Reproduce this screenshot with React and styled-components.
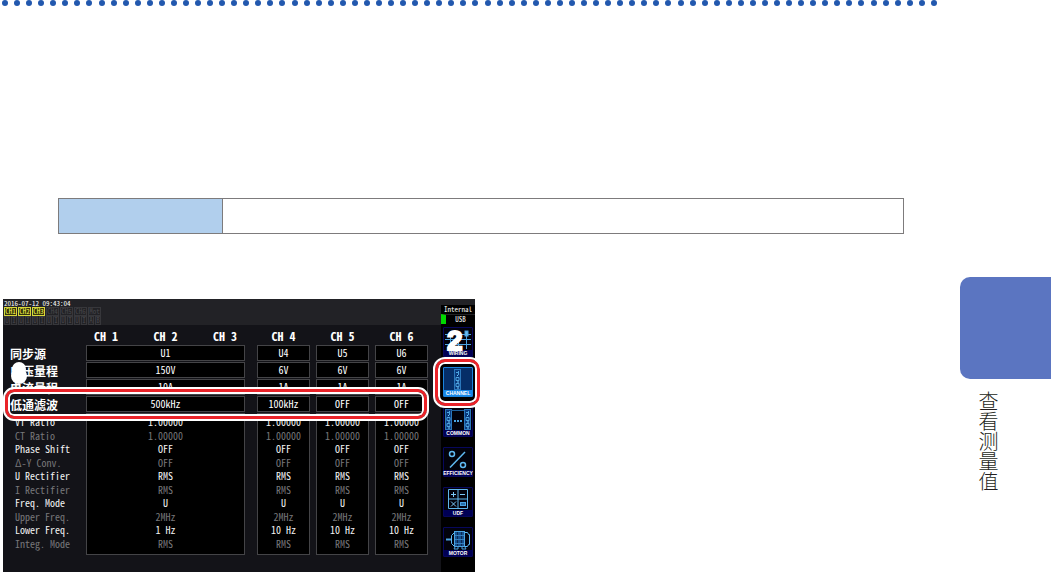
import React from 'react'
import styled, { createGlobalStyle } from "styled-components";


const GlobalStyle = createGlobalStyle`
  * { box-sizing: border-box; }
  body {
    margin: 0;
    background: #fff;
    font-family: "Noto Sans CJK SC", sans-serif;
  }
`;
const Page = styled.div`
  display: grid;
  grid-template-columns: 1fr 91px;
`;
const Dots = styled.div`
  display: flex;
  justify-content: space-between;
  padding: 0 22px 0 2px;
`;
const Dot = styled.span`
  width: 6px;
  height: 6px;
  border-radius: 50%;
  background: #2258ae;
`;
const Notice = styled.section`
  display: grid;
  grid-template-columns: 164px 1fr;
  height: 36px;
  margin: 192px 56px 65px 58px;
  border: 1px solid #7d7b7c;
`;
const NoticeHead = styled.div`
  background: #b1cfed;
  border-right: 1px solid #7d7b7c;
`;
const Aside = styled.aside`
  padding-top: 277px;
`;
const Tab = styled.div`
  height: 102px;
  border-radius: 10px 0 0 10px;
  background: #5b75c1;
`;
const Chapter = styled.h2`
  margin: 12px 0 0 18px;
  writing-mode: vertical-rl;
  font-size: 20px;
  line-height: 20px;
  font-weight: 300;
  color: #231f20;
`;

const Screen = styled.section`
  position: relative;
  display: grid;
  grid-template-columns: 1fr 34px;
  max-width: 472px;
  margin-left: 3px;
  background: #131318;
  color: #fff;
  font-family: "Noto Sans Mono CJK SC", "Noto Sans CJK SC", monospace;
`;
const StatusBar = styled.header`
  height: 26px;
  padding-left: 1px;
  background: #222226;
  font-size: 7px;
  line-height: 8px;
`;
const ChipRow = styled.div`
  display: flex;
  gap: 1px;
  height: 9px;
`;
const Chip = styled.span`
  width: ${(props) => (props.$small ? "6px" : "13px")};
  border: 1px solid ${(props) => (props.$on ? "#d8d83a" : "#37373b")};
  color: ${(props) => (props.$on ? "#ffff50" : "#48484c")};
  background: ${(props) => (props.$on ? "#35350c" : "transparent")};
  display: flex;
  align-items: center;
  justify-content: center;
  line-height: 7px;
`;
const Settings = styled.table`
  width: 100%;
  border-spacing: 0;
  table-layout: fixed;
  margin-bottom: 17px;
  font-size: 10px;

  th, td {
    padding: 0;
  }
`;
const Col = styled.col`
  width: ${(props) => props.$w}px;
`;
const Heads = styled.div`
  display: flex;
  justify-content: ${(props) => (props.$wide ? "space-between" : "center")};
  height: 20px;
  margin-right: ${(props) => props.$gap}px;
  padding: ${(props) => (props.$wide ? "0 8px" : "0")};
  font-size: 12px;
  line-height: 22px;
  font-weight: 700;
  white-space: pre;
`;
const RowName = styled.th`
  padding-left: 7px !important;
  text-align: left;
  font-family: "Noto Sans CJK SC", sans-serif;
  font-size: 12px;
  line-height: 16px;
  font-weight: 700;
`;
const Box = styled.div`
  height: 16px;
  margin: 0 ${(props) => props.$gap}px 1px 0;
  border: 1px solid #444447;
  background: #000;
  line-height: 14px;
  text-align: center;
`;
const ListRow = styled.tr`
  height: ${(props) => props.$h}px;
  line-height: ${(props) => props.$h}px;
  color: ${(props) => (props.$dim ? "#77777a" : "#f2f2f2")};
`;
const ListName = styled.th`
  padding-left: 12px !important;
  text-align: left;
  font-weight: 400;
`;
const ListValue = styled.div`
  height: ${(props) => props.$h}px;
  margin-right: ${(props) => props.$gap}px;
  border: solid #444447;
  border-width: 0 1px;
  background: #000;
  text-align: center;
`;
const Edge = styled.div`
  height: ${(props) => (props.$top ? "2px" : "5px")};
  margin-right: ${(props) => props.$gap}px;
  border: 1px solid #444447;
  border-width: ${(props) => (props.$top ? "1px 1px 0" : "0 1px 1px")};
  background: #000;
`;

const Side = styled.nav`
  display: flex;
  flex-direction: column;
  align-items: center;
  background: #000;
`;
const Source = styled.div`
  width: 100%;
  height: 26px;
  margin-bottom: 2px;
  border-top: 6px solid #222226;
  font-size: 7px;
  line-height: 9px;
  text-align: center;
`;
const Usb = styled.div`
  height: 10px;
  border-top: 1px solid #222226;
  border-left: 5px solid #00d800;
`;
const SideButton = styled.button`
  display: flex;
  flex-direction: column;
  align-items: center;
  width: 30px;
  height: 30px;
  margin-bottom: 10px;
  padding: 0;
  border: 1px solid ${(props) => (props.$active ? "#1b83dd" : "#07075c")};
  border-radius: 1px;
  background: ${(props) => (props.$active ? "#1687e8" : "#000054")};
  color: #fff;
  font-family: "Liberation Sans", sans-serif;
  font-size: 5px;
  line-height: 6px;
  font-weight: 700;
  white-space: nowrap;
  flex-shrink: 0;

  svg {
    display: block;
    background: ${(props) => (props.$active ? "#052e68" : "#02020c")};
  }
`;

const Ring = styled.div`
  position: absolute;
  border: 3px solid #ea2329;
  outline: 2px solid #fff;
  box-shadow: inset 0 0 0 2px #fff;
  pointer-events: none;
`;
const FilterRing = styled(Ring)`
  left: 2px;
  top: 90px;
  width: 422px;
  height: 30px;
  border-radius: 9px;
`;
const ChannelRing = styled(Ring)`
  left: 432px;
  top: 60px;
  width: 45px;
  height: 47px;
  border-radius: 10px;
`;
const StepOne = styled.div`
  position: absolute;
  left: 8px;
  top: 63px;
  width: 16px;
  height: 21px;

  svg {
    display: block;
  }
`;
const StepTwo = styled.div`
  position: absolute;
  left: 444px;
  top: 30px;
  font-family: "Liberation Sans", sans-serif;
  font-size: 28px;
  line-height: 24px;
  font-weight: 700;
  -webkit-text-stroke: 2px #fff;
`;

const gaps = [12, 6, 6, 0];

const topRows = [
  ["同步源", "U1", "U4", "U5", "U6"],
  ["电压量程", "150V", "6V", "6V", "6V"],
  ["电流量程", "10A", "1A", "1A", "1A"],
  ["低通滤波", "500kHz", "100kHz", "OFF", "OFF"],
];

const listRows = [
  ["VT Ratio", "1.00000"],
  ["CT Ratio", "1.00000"],
  ["Phase Shift", "OFF"],
  ["Δ-Y Conv.", "OFF"],
  ["U Rectifier", "RMS"],
  ["I Rectifier", "RMS"],
  ["Freq. Mode", "U"],
  ["Upper Freq.", "2MHz"],
  ["Lower Freq.", "1 Hz", "10 Hz"],
  ["Integ. Mode", "RMS"],
];

const Icon = ({ children }) => (
  <svg width="28" height="22" viewBox="0 0 28 22" fill="none" stroke="#4ba3e0" strokeWidth="1">
    {children}
  </svg>
);

const Module = ({ x }) => (
  <g transform={`translate(${x} 0)`}>
    <rect x="0.5" y="1.5" width="6" height="20" fill="#0a397c" stroke="#2b78bd" />
    <path d="M2 4.5h2M4.5 3v4M2 9.5h3v3H2zM2 15.5h3v3H2z" />
    <path d="M3 7.5h1M3 14h2M3 20h2" stroke="#7bc8f5" />
  </g>
);

const buttons = [
  {
    name: "WIRING",
    icon: <><path d="M1 6.5h26M1 11.5h26M1 16.5h26" /><path d="M6.5 3v17M14.5 3v17M22.5 8v13" /><rect x="21" y="3" width="3" height="5" fill="#6bbcf0" /></>,
  },
  { name: "CHANNEL", active: true, icon: <Module x={10} /> },
  {
    name: "COMMON",
    icon: <><Module x={1} /><Module x={20} /><path d="M7 2.5h13" stroke="#20609c" /><path d="M10 13h2M13 13h2M16 13h2" strokeWidth="2" /></>,
  },
  {
    name: "EFFICIENCY",
    icon: <g stroke="#5fb9f2" strokeWidth="1.5"><circle cx="8" cy="6" r="2.5" /><circle cx="19" cy="17" r="2.5" /><path d="M6 19.5L21 4" /></g>,
  },
  {
    name: "UDF",
    icon: <><path d="M4.5 1.5h19v19h-19zM14 2v18M5 11h18" stroke="#5fb5eb" /><path d="M7 6.5h5M9.5 4v5M16 6.5h5M7 13.5l5 5M12 13.5l-5 5" stroke="#7cc8f6" /><rect x="16.5" y="14.5" width="5" height="3" fill="#276da7" /></>,
  },
  {
    name: "MOTOR",
    icon: (
      <>
        <path d="M2 11.5h5" strokeWidth="2" />
        <path d="M7.5 7.5v8M7.5 7.5l3-3v14l-3-3M20.5 4.5h3l1 2h1v10h-1l-1 2h-3" stroke="#5fb9f2" />
        <path d="M11 19l-1 2h4v-2M18 19v2h4l-1-2" />
        <rect x="10.5" y="3.5" width="10" height="15" fill="#174f8d" />
        <path d="M13.5 4v14M17.5 4v14" stroke="#0a2850" />
        <path d="M11 7.5h9M11 11.5h9M11 15.5h9" stroke="#347ebd" />
      </>
    ),
  },
];

const SettingsTable = () => (
  <Settings>
    <colgroup>
      <Col $w={83} />
      <Col $w={171} />
      <Col $w={59} />
      <Col $w={59} />
      <Col $w={53} />
      <col />
    </colgroup>
    <thead>
      <tr>
        <td />
        <th><Heads $wide $gap={12}><span>CH 1</span><span>CH 2</span><span>CH 3</span></Heads></th>
        {["CH 4", "CH 5", "CH 6"].map((name, i) => (
          <th key={name}><Heads $gap={gaps[i + 1]}>{name}</Heads></th>
        ))}
      </tr>
    </thead>
    <tbody>
      {topRows.map(([name, ...values]) => (
        <tr key={name}>
          <RowName scope="row">{name}</RowName>
          {values.map((value, i) => <td key={i}><Box $gap={gaps[i]}>{value}</Box></td>)}
        </tr>
      ))}
    </tbody>
    <tbody>
      <tr>
        <td />
        {gaps.map((gap, i) => <td key={i}><Edge $top $gap={gap} /></td>)}
      </tr>
      {listRows.map(([name, first, rest], row) => {
        const h = row % 2 ? 13 : 14;
        return (
          <ListRow key={name} $h={h} $dim={row % 2 === 1}>
            <ListName scope="row">{name}</ListName>
            {gaps.map((gap, i) => (
              <td key={i}><ListValue $h={h} $gap={gap}>{i > 0 && rest ? rest : first}</ListValue></td>
            ))}
          </ListRow>
        );
      })}
      <tr>
        <td />
        {gaps.map((gap, i) => <td key={i}><Edge $gap={gap} /></td>)}
      </tr>
    </tbody>
  </Settings>
);

const App = () => {
  return (
    <>
      <GlobalStyle />
      <Page>
        <main>
          <Dots>
            {Array.from({ length: 78 }, (_, i) => <Dot key={i} />)}
          </Dots>
          <Notice>
            <NoticeHead />
          </Notice>
          <Screen>
            <div>
              <StatusBar>
                <div>2016-07-12 09:43:04</div>
                <ChipRow>
                  {["CH1", "CH2", "CH3", "CH4", "CH5", "CH6", "Mot"].map((name, i) => (
                    <Chip key={name} $on={i < 3}>{name}</Chip>
                  ))}
                </ChipRow>
                <ChipRow>
                  {"UIUIUIUIUIUIAB".split("").map((name, i) => <Chip key={i} $small>{name}</Chip>)}
                </ChipRow>
              </StatusBar>
              <SettingsTable />
            </div>
            <Side>
              <Source>
                Internal
                <Usb>USB</Usb>
              </Source>
              {buttons.map((item) => (
                <SideButton key={item.name} type="button" $active={item.active}>
                  <Icon>{item.icon}</Icon>
                  {item.name}
                </SideButton>
              ))}
            </Side>
            <FilterRing />
            <ChannelRing />
            <StepOne>
              <svg width="16" height="22" viewBox="0 0 16 22" fill="#fff">
                <circle cx="8" cy="7" r="7" />
                <circle cx="8" cy="14" r="8" />
              </svg>
            </StepOne>
            <StepTwo>2</StepTwo>
          </Screen>
        </main>
        <Aside>
          <Tab />
          <Chapter>查看测量值</Chapter>
        </Aside>
      </Page>
    </>
  );
}

export default App
